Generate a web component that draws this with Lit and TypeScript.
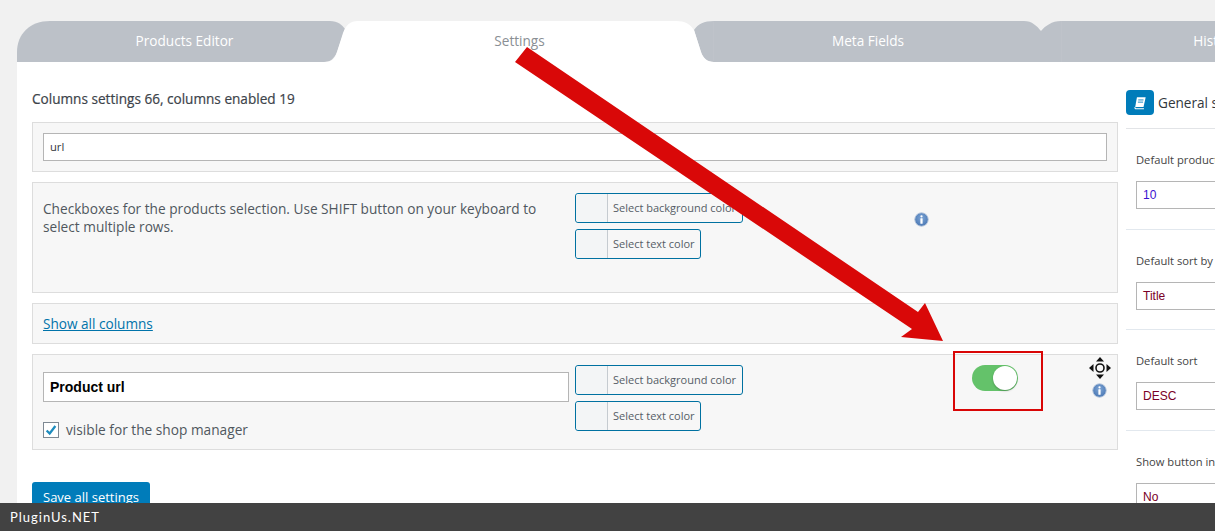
import { LitElement, html, css } from "lit";
import { customElement } from "lit/decorators.js";

const info = html`<svg class="info" viewBox="0 0 16 16" width="15" height="15">
  <defs><radialGradient id="ig" cx="50%" cy="40%" r="60%"><stop offset="0" stop-color="#7fa6d6"/><stop offset="1" stop-color="#4a78b4"/></radialGradient></defs>
  <circle cx="8" cy="8" r="7.2" fill="url(#ig)" stroke="#b9c8dc" stroke-width="1"/>
  <circle cx="8" cy="4.6" r="1.2" fill="#fff"/><rect x="6.8" y="6.6" width="2.4" height="6" rx=".6" fill="#fff"/></svg>`;

const move = html`<svg class="move" viewBox="0 0 22 22" width="22" height="22">
  <path d="M11 0l4 4.5H7zM11 22l-4-4.5h8zM0 11l4.5-4v8zM22 11l-4.5 4V7z" fill="#111"/>
  <circle cx="11" cy="11" r="4" fill="none" stroke="#111" stroke-width="1.6"/></svg>`;

const colorBtn = (t: string) => html`<div class="cbtn"><span class="sw"></span><span class="cl">${t}</span></div>`;

@customElement("app-root")
export class AppRoot extends LitElement {
  static styles = css`
    :host { display: flex; flex-direction: column; height: 531px; width: 1215px; overflow: hidden; position: relative;
      background: #f1f1f1; font-family: "Open Sans", sans-serif; color: #444; }
    .page { flex: 1; min-height: 0; overflow: hidden; padding: 21px 0 0 17px; }
    .tabs { position: relative; display: flex; height: 41px; }
    .tabshape { position: absolute; left: 0; top: 0; }
    .tab { position: relative; flex: none; display: flex; align-items: center; justify-content: center; font-size: 13.6px; line-height: 39px; padding-bottom: 2px; box-sizing: border-box; color: #fff; }
    .tab.active { color: #8a8f94; }
    .t1 { width: 335px; } .t2 { width: 335px; } .t3 { width: 362px; } .t4 { width: 334px; }
    .content { display: flex; background: #fff; padding: 27px 0 0 15px; gap: 8px; height: 441px; box-sizing: border-box; }
    .left { flex: none; width: 1086px; display: flex; flex-direction: column; }
    .title { font-size: 13.6px; font-weight: 500; -webkit-text-stroke: 0.2px #3c434a; line-height: 20px; margin: 0 0 13px; color: #3c434a; }
    .rows { display: flex; flex-direction: column; gap: 10px; }
    .row { background: #f7f7f7; border: 1px solid #ddd; box-sizing: border-box; }
    .search { padding: 10px; height: 50px; }
    .input { background: #fff; border: 1px solid #b5b5b5; box-sizing: border-box; display: flex; align-items: center; padding: 0 6px; }
    .search .input { height: 28px; font-size: 11.2px; color: #32373c; padding-bottom: 2px; }
    .grid { display: grid; grid-template-columns: 526px 333px 1fr 34px; column-gap: 6px; padding: 10px 0 10px 10px; }
    .r2 { height: 111px; }
    .r4 { height: 96px; }
    .desc { font-size: 13.66px; line-height: 18px; margin: 7px 0 0; color: #50575e; }
    .colors { display: flex; flex-direction: column; align-items: flex-start; gap: 6px; }
    .cbtn { display: flex; height: 30px; box-sizing: border-box; border: 1px solid #0071a1; border-radius: 3px; background: #f7f7f7; }
    .sw { width: 31px; background: #f3f5f6; border-right: 1px solid #c5cbd0; border-radius: 3px 0 0 3px; }
    .cl { font-size: 11px; color: #555d66; padding: 0 5.5px 0 5px; line-height: 28px; }
    .c3 { display: flex; align-items: flex-start; }
    .r2 .c3 { padding-top: 19px; }
    .info { display: block; }
    .link { padding: 10px; height: 41px; font-size: 13.6px; line-height: 19px; color: #0073aa; text-decoration: underline; }
    .name { height: 30px; margin-top: 7px; font: bold 14px "Liberation Sans", sans-serif; color: #000; }
    .check { display: flex; align-items: center; gap: 7px; margin-top: 18px; font-size: 13.7px; color: #50575e; }
    .box { width: 16px; height: 16px; box-sizing: border-box; border: 1px solid #7e8993; background: #fff; display: block; }
    .toggle { width: 46px; height: 26px; margin-left: 58px; border-radius: 13px; background: #64c26a; position: relative; }
    .knob { position: absolute; right: 1px; top: 1px; width: 24px; height: 24px; border-radius: 50%; background: #fff; box-shadow: 0 1px 2px rgba(0,0,0,.25); }
    .tools { display: flex; flex-direction: column; align-items: center; gap: 4px; margin-top: -8px; }
    .tools .info { margin-left: -1px; }
    .save { align-self: flex-start; margin-top: 32px; background: #007cba; color: #fff; font-size: 13px; line-height: 30px; padding: 0 11px; height: 32px; border-radius: 3px; }
    .right { flex: none; width: 300px; }
    .head { display: flex; align-items: center; gap: 4px; height: 25px; margin-top: 1px; padding-bottom: 13px; border-bottom: 1px solid #e2e4e7; font-size: 13.6px; font-weight: 500; color: #32373c; white-space: nowrap; }
    .bookbg { width: 28px; height: 25px; background: #007cba; border-radius: 4px; display: flex; align-items: center; justify-content: center; }
    .sec { padding: 21px 10px 19.5px; border-bottom: 1px solid #e2e8ee; }
    .lab { font-size: 11.2px; line-height: 20px; margin-bottom: 11px; color: #444; white-space: nowrap; }
    .sel { height: 28px; font: 12px "Liberation Sans", sans-serif; color: #7a0026; }
    .num { color: #3a10d0; }
    footer { flex: none; height: 28px; background: #424242; color: #fff; font-size: 13px; letter-spacing: 1px; line-height: 28px; padding-left: 10px; font-family: "Lato", sans-serif; position: relative; z-index: 2; }
    .arrow { position: absolute; left: 0; top: 0; pointer-events: none; }
  `;

  render() {
    return html`
      <div class="page">
        <div class="tabs">
          <svg class="tabshape" width="1198" height="41" viewBox="17 21 1198 41">
            <path fill="#bcc1c8" d="M17 62V52C17 34 30 21 50 21H330C338 21 342 25 345 29L337 52C334 59 330 62 324 62Z"/>
            <path fill="#bcc1c8" d="M694 30C698 24 704 21 714 21H1024C1032 21 1037 26 1041 31C1045 26 1052 21 1061 21H1215V62H714C707 62 703 58 701 52Z"/>
            <path fill="#fff" d="M325 62C331 62 335 59 337 52L343 33C346 25 350 21 358 21H676C685 21 690 24 694 30L701 52C703 58 707 62 714 62Z"/>
            <path d="M713.5 21V62M1061.5 21V62" stroke="#bfc3ca" stroke-width="1"/>
          </svg>
          <div class="tab t1">Products Editor</div>
          <div class="tab t2 active">Settings</div>
          <div class="tab t3">Meta Fields</div>
          <div class="tab t4">History</div>
        </div>
        <div class="content">
          <div class="left">
            <h3 class="title">Columns settings 66, columns enabled 19</h3>
            <div class="rows">
              <div class="row search"><div class="input">url</div></div>
              <div class="row grid r2">
                <p class="desc">Checkboxes for the products selection. Use SHIFT button on your keyboard to select multiple rows.</p>
                <div class="colors">${colorBtn("Select background color")}${colorBtn("Select text color")}</div>
                <div class="c3">${info}</div>
                <div></div>
              </div>
              <div class="row link">Show all columns</div>
              <div class="row grid r4">
                <div>
                  <div class="input name">Product url</div>
                  <label class="check"><svg class="box" viewBox="0 0 16 16"><path d="M3 8.5l3.5 3.5L13 3.5" fill="none" stroke="#1e8cbe" stroke-width="2.6"/></svg>visible for the shop manager</label>
                </div>
                <div class="colors">${colorBtn("Select background color")}${colorBtn("Select text color")}</div>
                <div class="c3"><div class="toggle"><span class="knob"></span></div></div>
                <div class="tools">${move}${info}</div>
              </div>
            </div>
            <div class="save">Save all settings</div>
          </div>
          <aside class="right">
            <div class="head"><span class="bookbg"><svg viewBox="0 0 16 16" width="14" height="14"><path d="M4.5 1.5H14.5L12 12.5H2.5L4.5 1.5Z" fill="#fff"/><path d="M2.3 12.8C2 14 2.6 14.6 3.6 14.6H12.5" fill="none" stroke="#fff" stroke-width="1.2"/><path d="M6 4.5H12M5.6 7H11.5" stroke="#007cba" stroke-width="1"/></svg></span>General settings</div>
            <div class="sec"><div class="lab">Default products per page</div><div class="input sel num">10</div></div>
            <div class="sec"><div class="lab">Default sort by</div><div class="input sel">Title</div></div>
            <div class="sec"><div class="lab">Default sort</div><div class="input sel">DESC</div></div>
            <div class="sec"><div class="lab">Show button in</div><div class="input sel">No</div></div>
          </aside>
        </div>
      </div>
      <footer>PluginUs.NET</footer>
      <svg class="arrow" width="1215" height="531" viewBox="0 0 1215 531">
        <polygon fill="#d90808" points="527,47 918,312 925,303 943,341 901,337 912,329 515,62"/>
        <rect x="954" y="352" width="88" height="58" fill="none" stroke="#d90606" stroke-width="2"/>
      </svg>
    `;
  }
}
